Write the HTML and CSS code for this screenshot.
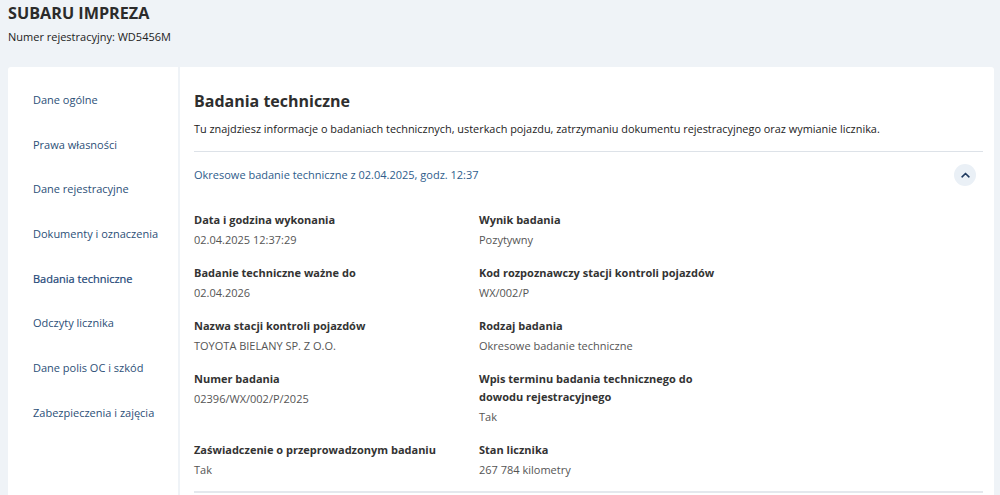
FILE: index.html
```html
<!DOCTYPE html>
<html lang="pl">
<head>
<meta charset="utf-8">
<link rel="stylesheet" href="styles.css">
</head>
<body>
<header class="page-head">
  <h1 class="title">SUBARU IMPREZA</h1>
  <p class="reg">Numer rejestracyjny: WD5456M</p>
</header>
<div class="layout">
  <nav class="sidebar">
    <a class="nav-item">Dane ogólne</a>
    <a class="nav-item">Prawa własności</a>
    <a class="nav-item">Dane rejestracyjne</a>
    <a class="nav-item">Dokumenty i oznaczenia</a>
    <a class="nav-item active">Badania techniczne</a>
    <a class="nav-item">Odczyty licznika</a>
    <a class="nav-item">Dane polis OC i szkód</a>
    <a class="nav-item">Zabezpieczenia i zajęcia</a>
  </nav>
  <main class="main">
    <h2 class="section-title">Badania techniczne</h2>
    <p class="desc">Tu znajdziesz informacje o badaniach technicznych, usterkach pojazdu, zatrzymaniu dokumentu rejestracyjnego oraz wymianie licznika.</p>
    <section class="acc">
      <div class="acc-head">
        <span class="acc-title">Okresowe badanie techniczne z 02.04.2025, godz. 12:37</span>
        <span class="chev">
          <svg width="9" height="6" viewBox="0 0 10 6"><path d="M1.2 5 L5 1.3 L8.8 5" fill="none" stroke="#1f3a5f" stroke-width="1.8" stroke-linecap="round" stroke-linejoin="round"/></svg>
        </span>
      </div>
      <div class="grid">
        <div class="item"><div class="label">Data i godzina wykonania</div><div class="value">02.04.2025 12:37:29</div></div>
        <div class="item"><div class="label">Wynik badania</div><div class="value">Pozytywny</div></div>
        <div class="item"><div class="label">Badanie techniczne ważne do</div><div class="value">02.04.2026</div></div>
        <div class="item"><div class="label">Kod rozpoznawczy stacji kontroli pojazdów</div><div class="value">WX/002/P</div></div>
        <div class="item"><div class="label">Nazwa stacji kontroli pojazdów</div><div class="value">TOYOTA BIELANY SP. Z O.O.</div></div>
        <div class="item"><div class="label">Rodzaj badania</div><div class="value">Okresowe badanie techniczne</div></div>
        <div class="item"><div class="label">Numer badania</div><div class="value">02396/WX/002/P/2025</div></div>
        <div class="item"><div class="label">Wpis terminu badania technicznego do dowodu rejestracyjnego</div><div class="value">Tak</div></div>
        <div class="item"><div class="label">Zaświadczenie o przeprowadzonym badaniu</div><div class="value">Tak</div></div>
        <div class="item"><div class="label">Stan licznika</div><div class="value">267 784 kilometry</div></div>
      </div>
      <div class="acc-bottom"></div>
    </section>
  </main>
</div>
</body>
</html>
```
FILE: styles.css
```css
* { box-sizing: border-box; }
html, body { margin: 0; padding: 0; }
body {
  background: #eff3f7;
  font-family: "Open Sans", "Noto Sans", sans-serif;
  color: #333;
  padding: 0 6px 0 8px;
  overflow: hidden;
  height: 495px;
}
.page-head { padding-top: 2px; height: 67px; }
.title {
  margin: 0;
  font-size: 16.2px;
  font-weight: 700;
  line-height: 22px;
  color: #2b2b2b;
}
.reg {
  margin: 4px 0 0;
  font-size: 11px;
  line-height: 18px;
  color: #222;
}
.layout {
  display: flex;
  gap: 2px;
  align-items: stretch;
  height: 440px;
}
.sidebar {
  width: 170px;
  background: #fff;
  border-radius: 3px 0 0 0;
  padding: 24px 0 0 25px;
  display: flex;
  flex-direction: column;
}
.nav-item {
  font-size: 11px;
  line-height: 18px;
  height: 44.7px;
  color: #2c4f77;
}
.nav-item.active { color: #1c4677; -webkit-text-stroke: 0.2px #1c4677; }
.main {
  flex: 1;
  background: #fff;
  border-radius: 0 3px 0 0;
  padding: 22px 11px 0 14px;
}
.section-title {
  margin: 0;
  font-size: 16px;
  font-weight: 700;
  line-height: 24px;
  color: #2e2e2e;
}
.desc {
  margin: 7px 0 0;
  font-size: 10.9px;
  line-height: 18px;
  color: #222;
}
.acc { margin-top: 13px; border-top: 1px solid #dde2e8; }
.acc-head {
  display: flex;
  align-items: center;
  justify-content: space-between;
  height: 45px;
  padding-right: 7px;
}
.acc-title { font-size: 11px; color: #2f5d8c; line-height: 18px; }
.chev {
  width: 22px; height: 22px;
  border-radius: 50%;
  background: #eaf0f6;
  display: flex; align-items: center; justify-content: center;
}
.grid {
  display: grid;
  grid-template-columns: 261px 240px;
  column-gap: 24px;
  row-gap: 15px;
  padding-top: 14px;
}
.label { font-size: 11px; font-weight: 700; line-height: 18px; color: #333; }
.value { font-size: 11px; line-height: 18px; margin-top: 2px; color: #555; }
.acc-bottom { margin-top: 12px; height: 2px; background: #e4e8ed; }
```
